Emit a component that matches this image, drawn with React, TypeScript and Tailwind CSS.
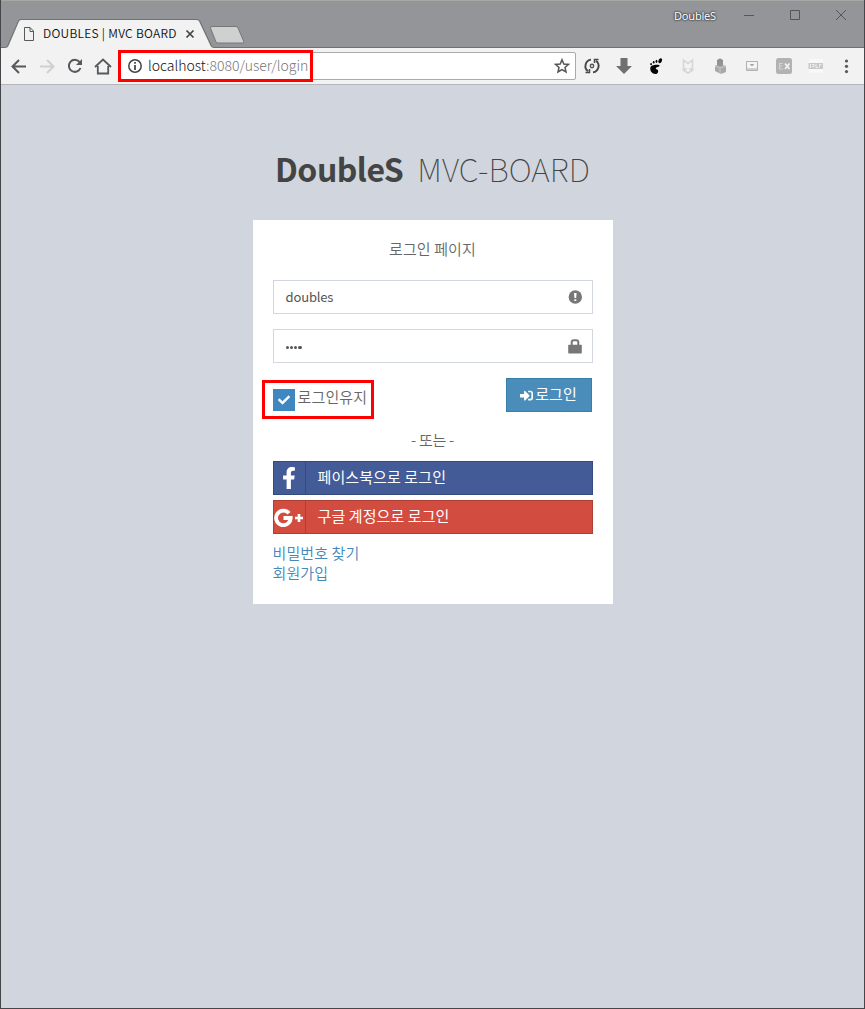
import React from 'react';
import { FaFacebookF, FaCheck, FaSignInAlt } from 'react-icons/fa';

const kr = "font-['Noto_Sans_CJK_KR','Noto_Sans',sans-serif]";

function TitleBar() {
  return (
    <div className="relative h-12 shrink-0 bg-[#939598] border-t border-[#a5a8a5]">
      <svg className="absolute left-0 top-0" width="865" height="47" viewBox="0 1 865 47" fill="none">
        <path d="M0 47.5H5.5Q7 47.5 8 45L18.500 21Q19 19.500 21 19.500H197Q199 19.500 200 21.500L211 45Q212 47.500 214 47.500H865" stroke="#6f7074" />
        <path d="M0 48H5.500Q8 48 9 45L19 21.500Q20 20 21 20H197Q198 20 199 21.500L210 45Q211 48 214 48Z" fill="#f2f2f2" />
        <path d="M212 26.500H236Q237.500 26.500 238 28L244 42Q244 43 243 43H218Q216.500 43 216 42L210.500 28Q210.500 26.500 212 26.500Z" fill="#d0d0d0" stroke="#77787b" />
        <path d="M24.500 27.500H30L33.500 31V40.500H24.500ZM30 27.500V31.500H33.500" stroke="#56585a" />
        <path d="M186.500 30.500L193.500 37.500M193.500 30.500L186.500 37.500" stroke="#414244" strokeWidth="1.700" />
        <path d="M744 15.500H754M790.500 10.500H799.500V19.500H790.500ZM836 10L846 20M846 10L836 20" stroke="#555658" />
      </svg>
      <span className={`absolute left-[43px] top-[23px] text-[12px] leading-[18px] font-[350] tracking-[0.270px] whitespace-nowrap text-[#111] ${kr}`}>DOUBLES | MVC BOARD</span>
      <span className="absolute left-[674px] top-[7px] text-[11px] leading-[16px] tracking-[-0.200px] text-white [text-shadow:0_0_2px_#222,0_0_2px_#222] font-['Noto_Sans',sans-serif]">DoubleS</span>
    </div>
  );
}

function ToolBar() {
  return (
    <div className="relative h-[37px] shrink-0 bg-[#f2f2f2] border-b border-[#b6b6ba] flex items-start pl-[120px]">
      <div className="mt-1 flex h-7 w-[456px] items-center rounded-[2px] border border-[#aaaaad] bg-white pl-[27px]">
        <span className={`pb-[2px] text-[14px] leading-5 font-light text-[#777] ${kr}`}><span className="text-[#111]">localhost</span>:8080/user/login</span>
      </div>
      <svg className="absolute left-0 top-0" width="865" height="37" viewBox="0 48 865 37" fill="none">
        <path d="M26 66.500H13M19 60L12.500 66.500L19 73" stroke="#55585c" strokeWidth="2" />
        <path d="M40 66.500H53M47 60L53.500 66.500L47 73" stroke="#d0d0d0" strokeWidth="2" />
        <path d="M79.500 62A6 6 0 1 0 80.500 68" stroke="#55585c" strokeWidth="2" />
        <path d="M82 59V65H76Z" fill="#55585c" />
        <path d="M95 67L103 59.500L111 67M97.800 66V73.500H108.200V66" stroke="#55585c" strokeWidth="1.800" />
        <circle cx="135" cy="66" r="6.200" stroke="#444" strokeWidth="1.500" />
        <path d="M135 65V70M135 62V63.700" stroke="#333" strokeWidth="1.600" />
        <path d="M562 59.700L563.800 64L568.500 64.400L565 67.500L566 72L562 69.600L558 72L559 67.500L555.500 64.400L560.200 64Z" stroke="#555" strokeWidth="1.500" />
        <path d="M591 59.600A6.500 6.500 0 0 0 588 71.200M593 72.400A6.500 6.500 0 0 0 596 60.800" stroke="#484848" strokeWidth="1.900" />
        <path d="M585.500 72.500H589.500V69M598.500 59.500H594.500V63" stroke="#484848" strokeWidth="1.500" />
        <circle cx="592" cy="66" r="1.700" stroke="#555" strokeWidth="1.400" />
        <path d="M620.500 58H627.500V66H632L624 74L616 66H620.500Z" fill="#707070" />
        <g fill="#050505">
          <path d="M650.300 68C650.500 65.300 654 64.600 658 64.800C660.800 65.200 659.500 67 657 67.200C655.300 67.700 655.500 69 657 69.400C659 70 658.500 73.900 655.300 74C652 73.800 650 71 650.300 68Z" />
          <ellipse cx="660.200" cy="60.700" rx="1.700" ry="2.600" transform="rotate(25 660.200 60.700)" />
          <ellipse cx="656.500" cy="61.300" rx="0.900" ry="1.600" />
          <ellipse cx="653.700" cy="62.300" rx="0.900" ry="1.300" />
          <ellipse cx="651.100" cy="64.200" rx="0.900" ry="1.100" />
        </g>
        <path d="M683.500 69V60L688 63.500L692.500 60V69M682.500 69.500L688 73L693.500 69.500M684 69H687M689 69H692" stroke="#d5d5d5" strokeWidth="1.500" />
        <path d="M717 60L720 58.500L723 60V65L726 66V72L721 74L715 71V66L717 65Z" fill="#a8a8a8" />
        <path d="M715 66L720 68L726 66M720 68V74" stroke="#c8c8c8" />
        <path d="M717 60L720 58.500L723 60V65L720 66L717 65Z" fill="#929292" />
        <path d="M746.500 61.500H757.500V70.500H746.500Z" fill="#f5f5f5" stroke="#b0b0b0" />
        <path d="M747 69H757M750 64.500H754M751 65.500H753" stroke="#aaa" />
        <rect x="776" y="58" width="16" height="16" rx="2.500" fill="#b2b2b2" />
        <path d="M783 63.500H779.500V69H783M779.500 66H782.500" stroke="#d2d2d2" strokeWidth="1.200" />
        <path d="M785 63.500L789.500 69M789.500 63.500L785 69" stroke="#f3f3f3" strokeWidth="1.700" />
        <rect x="809" y="59" width="14" height="14" fill="#f8f8f8" />
        <rect x="808.500" y="63" width="14.500" height="6" fill="#c8c8c8" />
        <path d="M810.500 64V68M812 64.500H814V66.500H812M816 64V67.500H818M819.500 67.500V64.500H821.500" stroke="#eee" />
        <g fill="#55585c"><circle cx="846.500" cy="61" r="1.600" /><circle cx="846.500" cy="66.300" r="1.600" /><circle cx="846.500" cy="71.600" r="1.600" /></g>
      </svg>
      <div className="absolute left-[118px] top-[2px] h-8 w-[195px] border-[3px] border-[#f00]" />
    </div>
  );
}

function SocialButton({ className, icon, children }: { className: string; icon: React.ReactNode; children: React.ReactNode }) {
  return (
    <button className={`flex h-[34px] w-full items-center border text-left text-[15px] leading-5 tracking-[0.100px] text-white ${className}`}>
      <span className="flex h-8 w-8 shrink-0 items-center justify-center border-r border-inherit">{icon}</span>
      <span className="pl-3 pb-[2px] whitespace-nowrap">{children}</span>
    </button>
  );
}

export default function App() {
  return (
    <div className={`relative flex h-[1009px] w-[865px] flex-col overflow-hidden bg-[#d1d5de] text-[#666] ${kr}`}>
      <TitleBar />
      <ToolBar />
      <main className="flex flex-col items-center">
        <h1 className="mt-[58px] flex h-[50px] w-[315px] items-center justify-between text-[32px] leading-[50px] text-[#444] whitespace-nowrap">
          <b className="font-bold tracking-[-0.500px]">DoubleS</b><span className="font-thin tracking-[0.100px]">MVC-BOARD</span>
        </h1>
        <section className="mt-[27px] h-[384px] w-[360px] bg-white px-5 pt-[19px] text-[15px] leading-5 tracking-[0.100px]">
          <p className="h-[41px] text-center font-[350]">로그인 페이지</p>
          <div className="flex h-[34px] items-center justify-between border border-[#d2d6de] pl-3 pr-[10px] text-[13px] tracking-[-0.150px] text-[#555]">
            <span>doubles</span>
            <svg width="14" height="14" viewBox="0 0 14 14"><circle cx="7.300" cy="7" r="6.700" fill="#777" /><path d="M6 3H8.600L8.200 8H6.400ZM6.300 9.200H8.300V11H6.300Z" fill="#fff" /></svg>
          </div>
          <div className="mt-[15px] flex h-[34px] items-center justify-between border border-[#d2d6de] pl-3 pr-[10px]">
            <span className="flex gap-[1px] pt-[3px]">{[0, 1, 2, 3].map((i) => <i key={i} className="size-[3.300px] rounded-full bg-[#555]" />)}</span>
            <svg width="14" height="15" viewBox="0 0 14 15"><path d="M3.700 7V3.200Q3.700 1.300 5.700 1.300H8.300Q10.300 1.300 10.300 3.200V7" fill="none" stroke="#777" strokeWidth="2" /><rect x=".2" y="5.800" width="13.600" height="8.700" rx=".8" fill="#777" /></svg>
          </div>
          <div className="relative mt-[15px] flex h-[34px] items-start justify-between pr-px">
            <div className="flex items-start"><span className="mt-[11px] flex size-[22px] items-center justify-center bg-[#3f87c1] text-white"><FaCheck size="12" /></span><span className="ml-[3px] mt-[9px] font-[350] tracking-[0.150px]">로그인유지</span></div>
            <button className="flex h-[34px] w-[86px] items-center justify-center gap-[2px] border border-[#367fa9] bg-[#4b8dba] text-[15px] tracking-[0.100px] text-white"><FaSignInAlt size="13" /><span className="pb-[2px]">로그인</span></button>
            <div className="absolute -left-[11px] top-[2px] h-[39px] w-[112px] border-[3px] border-[#f00]" />
          </div>
          <p className="mt-[18px] h-[31px] text-center font-[350] tracking-[-0.300px]">- 또는 -</p>
          <SocialButton className="border-[#354b7e] bg-[#435b96]" icon={<FaFacebookF size="22" />}>페이스북으로 로그인</SocialButton>
          <div className="h-[5px]" />
          <SocialButton className="border-[#ae3f34] bg-[#d34c40]" icon={<svg width="30" height="20" viewBox="0 0 30 20" fill="none" stroke="white"><path d="M15 6.200A7.300 7.300 0 1 0 16.700 11H9.500" strokeWidth="3.800" /><path d="M21 11H29M25 7V15" strokeWidth="2.600" /></svg>}>구글 계정으로 로그인</SocialButton>
          <div className="mt-[9px] flex flex-col font-[350] text-[#4489b9]"><a>비밀번호 찾기</a><a>회원가입</a></div>
        </section>
      </main>
      <div className="pointer-events-none absolute inset-0 border-x border-b border-[#45464a]" />
    </div>
  );
}
